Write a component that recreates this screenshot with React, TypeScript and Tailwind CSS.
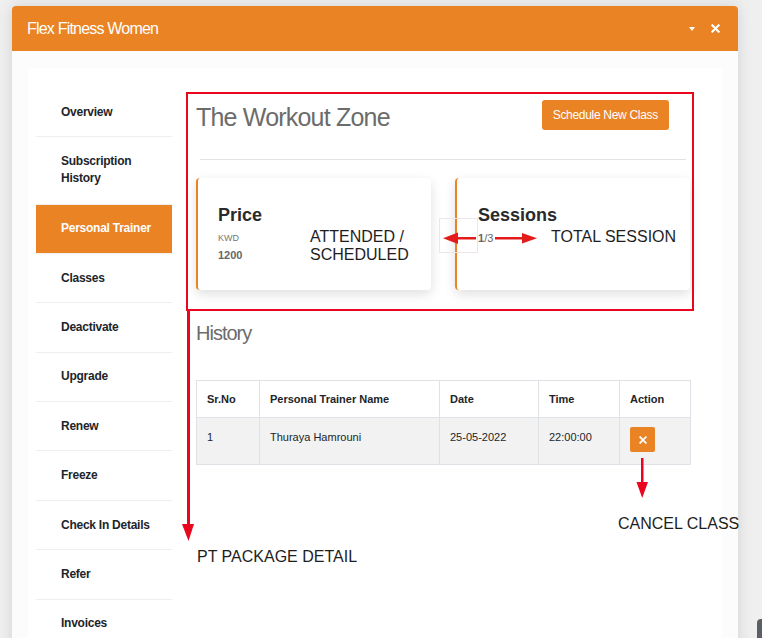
import React from 'react';

const menu = [
  'Overview',
  'Subscription History',
  'Personal Trainer',
  'Classes',
  'Deactivate',
  'Upgrade',
  'Renew',
  'Freeze',
  'Check In Details',
  'Refer',
  'Invoices',
];

const rows = [{ no: '1', name: 'Thuraya Hamrouni', date: '25-05-2022', time: '22:00:00' }];

function XIcon({ size, stroke }: { size: number; stroke: number }) {
  return (
    <svg width={size} height={size} viewBox="0 0 10 10" fill="none">
      <path d="M1.5 1.5 L8.5 8.5 M8.5 1.5 L1.5 8.5" stroke="white" strokeWidth={stroke} strokeLinecap="square" />
    </svg>
  );
}

export default function App() {
  return (
    <div className="relative h-screen overflow-hidden bg-[#efefef] font-['Liberation_Sans',Arial,sans-serif] text-[#212529]">
      <div className="ml-[12px] mt-[6px] w-[726px] rounded-t-[4px] bg-[#fcfcfc] shadow-[0_0_14px_rgba(0,0,0,0.12)]">
        {/* header */}
        <div className="flex h-[45px] items-center justify-between rounded-t-[4px] bg-[#e98324] pl-[15px] pr-[18px]">
          <span className="text-[16px] tracking-[-0.8px] text-white">Flex Fitness Women</span>
          <div className="flex items-center gap-[16px]">
            <span className="h-0 w-0 border-x-[3.5px] border-t-[4px] border-x-transparent border-t-white" />
            <XIcon size={9} stroke={2.3} />
          </div>
        </div>

        {/* body */}
        <div className="px-[16px] pt-[17px]">
          <div className="flex h-[700px] bg-white pl-[8px] pr-[32px]">
            <nav className="w-[136px] shrink-0 pt-[20px]">
              {menu.map((m) => (
                <div
                  key={m}
                  className={
                    m === 'Personal Trainer'
                      ? 'border-b border-[#eeeeee] bg-[#e98324] py-[15.7px] pl-[25px] pr-[8px] text-[12px] font-bold leading-[17px] tracking-[-0.25px] text-white'
                      : m === 'Subscription History'
                        ? 'border-b border-[#eeeeee] pb-[16.5px] pl-[25px] pr-[8px] pt-[15.7px] text-[12px] font-bold leading-[17px] tracking-[-0.25px] text-[#212529]'
                        : 'border-b border-[#eeeeee] py-[15.7px] pl-[25px] pr-[8px] text-[12px] font-bold leading-[17px] tracking-[-0.25px] text-[#212529]'
                  }
                >
                  {m}
                </div>
              ))}
            </nav>

            <main className="relative ml-[24px] w-[494px] pt-[32px]">
              <div className="flex items-start justify-between pr-[21px]">
                <h1 className="pt-[2px] text-[25px] leading-[30px] tracking-[-0.8px] text-[#6c6c6c]">The Workout Zone</h1>
                <button
                  type="button"
                  className="h-[30px] rounded-[3px] bg-[#e98324] px-[11px] text-[12px] tracking-[-0.3px] text-white"
                >
                  Schedule New Class
                </button>
              </div>

              <div className="mx-[4px] mt-[27px] h-px bg-[#e2e2e2]" />

              <div className="mt-[18px] grid grid-cols-2 gap-[24px]">
                <div className="h-[112px] rounded-[4px] border-l-2 border-[#e98324] bg-white pl-[20px] pt-[26px] shadow-[0_4px_12px_rgba(0,0,0,0.13)]">
                  <div className="text-[18px] font-bold leading-[22px] text-[#2a2a2a]">Price</div>
                  <div className="mt-[6px] text-[9px] leading-[12px] text-[#777]">KWD</div>
                  <div className="mt-[4px] text-[11px] font-bold leading-[14px] text-[#666]">1200</div>
                </div>
                <div className="h-[112px] rounded-[4px] border-l-2 border-[#e98324] bg-white pl-[21px] pt-[26px] shadow-[0_4px_12px_rgba(0,0,0,0.13)]">
                  <div className="text-[18px] font-bold leading-[22px] text-[#2a2a2a]">Sessions</div>
                  <div className="mt-[5px] text-[11px] font-bold leading-[14px] text-[#666]">
                    1<span className="font-normal">/3</span>
                  </div>
                </div>
              </div>

              <h2 className="mt-[31px] text-[20px] leading-[24px] tracking-[-1px] text-[#6c6c6c]">History</h2>

              <table className="mt-[35px] w-full table-fixed border-collapse text-[11px]">
                <colgroup>
                  <col className="w-[63px]" />
                  <col className="w-[180px]" />
                  <col className="w-[99px]" />
                  <col className="w-[81px]" />
                  <col className="w-[71px]" />
                </colgroup>
                <thead>
                  <tr>
                    {['Sr.No', 'Personal Trainer Name', 'Date', 'Time', 'Action'].map((h) => (
                      <th key={h} className="border border-[#dee2e6] px-[10px] py-[11px] text-left font-bold leading-[14px]">
                        {h}
                      </th>
                    ))}
                  </tr>
                </thead>
                <tbody>
                  {rows.map((r) => (
                    <tr key={r.no} className="bg-[#f2f2f2]">
                      <td className="border border-[#dee2e6] px-[10px] pt-[12px] align-top leading-[14px]">{r.no}</td>
                      <td className="border border-[#dee2e6] px-[10px] pt-[12px] align-top leading-[14px]">{r.name}</td>
                      <td className="border border-[#dee2e6] px-[10px] pt-[12px] align-top leading-[14px]">{r.date}</td>
                      <td className="border border-[#dee2e6] px-[10px] pt-[12px] align-top leading-[14px]">{r.time}</td>
                      <td className="border border-[#dee2e6] pb-[12px] pl-[10px] pt-[9px] align-top">
                        <button
                          type="button"
                          className="flex h-[25px] w-[25px] items-center justify-center rounded-[2px] bg-[#e98324]"
                        >
                          <XIcon size={8} stroke={2.2} />
                        </button>
                      </td>
                    </tr>
                  ))}
                </tbody>
              </table>

              {/* annotations */}
              <div className="pointer-events-none absolute left-[-10px] top-[24px] h-[219px] w-[508px] border-2 border-[#e8071f]" />
              <div className="pointer-events-none absolute left-[243px] top-[150px] h-[35px] w-[39px] border border-[#eee6e6]" />
              <svg className="pointer-events-none absolute left-0 top-0 overflow-visible" width="1" height="1">
                <rect x="-9" y="241" width="3" height="217" fill="#e8071f" />
                <polygon points="-14,456 -2,456 -7.5,473" fill="#e8071f" />
                <rect x="260" y="169" width="20" height="2.5" fill="#e31b1b" />
                <polygon points="247,170.2 262,164.5 262,176" fill="#e31b1b" />
                <rect x="299" y="169" width="28" height="2.5" fill="#e31b1b" />
                <polygon points="341,170.2 326,165 326,175.5" fill="#e31b1b" />
                <rect x="445" y="390" width="2.5" height="26" fill="#e8071f" />
                <polygon points="440.5,414 452,414 446.2,430" fill="#e8071f" />
              </svg>
              <div className="pointer-events-none absolute left-[114px] top-[160px] text-[16px] leading-[18px] text-[#1e1e1e]">
                ATTENDED /<br />
                SCHEDULED
              </div>
              <div className="pointer-events-none absolute left-[355px] top-[160px] whitespace-nowrap text-[16px] leading-[18px] text-[#1e1e1e]">
                TOTAL SESSION
              </div>
              <div className="pointer-events-none absolute left-[1px] top-[480px] whitespace-nowrap text-[16px] leading-[18px] text-[#1e1e1e]">
                PT PACKAGE DETAIL
              </div>
              <div className="pointer-events-none absolute left-[422px] top-[447px] whitespace-nowrap text-[16px] leading-[18px] text-[#1e1e1e]">
                CANCEL CLASS
              </div>
            </main>
          </div>
        </div>
      </div>
      <div className="absolute left-[757px] top-[619px] h-[40px] w-[8px] rounded-[4px] bg-[#5c5f63]" />
    </div>
  );
}
